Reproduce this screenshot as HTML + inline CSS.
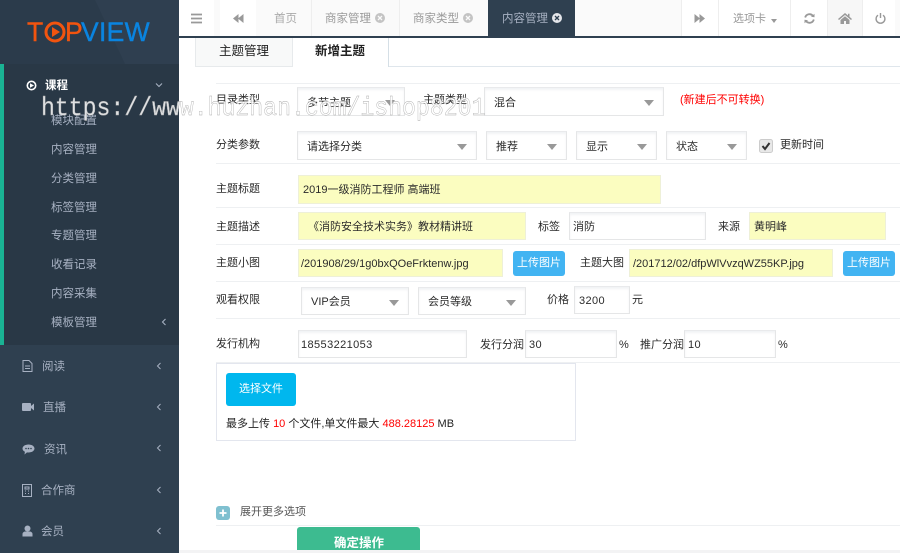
<!DOCTYPE html>
<html lang="zh"><head><meta charset="utf-8"><title>新增主题</title>
<style>
html,body{margin:0;padding:0;width:900px;height:553px;overflow:hidden;background:#fff}
body{position:relative;font:11px/16px "Liberation Sans","Noto Sans CJK SC",sans-serif;color:#2b2b2b}
div,span.a,svg.a{position:absolute}
.t{position:absolute;white-space:nowrap;height:16px;line-height:16px}
.n{color:#a7b1c2;font-size:11.5px;margin-top:1px}.m{color:#a7b1c2;font-size:11.5px;margin-top:1px}
.f{position:absolute;box-sizing:border-box;border:1px solid #e5e6e7;border-top-color:#e9eaec;box-shadow:inset 0 2px 2px #f2f3f5;background:#fff;padding-left:9px;line-height:29px;color:#2b2b2b;white-space:nowrap;overflow:hidden}
.y{background:#fbfdc0;border-color:#eef0d8;box-shadow:none;padding-left:4px}
.s{line-height:31px}
.s:after{content:"";position:absolute;right:9px;top:12px;border:5px solid transparent;border-top:6px solid #999;border-bottom:0}
.l{position:absolute;height:1px;left:216px;right:0;background:#eef0f2}
.b{position:absolute;background:#42b4f2;color:#fff;border-radius:3px;text-align:center;height:25px;line-height:25px;width:52px;top:251px}
.d{position:absolute;top:0;width:1px;height:36px;background:#eee}
.tb{font-size:11.5px}
.lg{position:absolute;white-space:nowrap;top:18px;height:28px;line-height:28px;font-size:26.5px;-webkit-text-stroke:.4px currentColor}
</style></head><body>
<!-- sidebar -->
<div style="left:0;top:0;width:179px;height:553px;background:#2f4050"></div>
<svg class="a" style="left:0;top:0" width="179" height="64"><rect width="179" height="64" fill="#2b3b4b"/><polygon points="95,0 179,0 179,64 125,64" fill="#2f3f50"/></svg>
<div style="left:0;top:64px;width:179px;height:281px;background:#293846"></div>
<div style="left:0;top:64px;width:4px;height:281px;background:#1ab394"></div>
<!-- logo -->
<span class="lg" style="left:27px;color:#f2540f">T</span>
<svg class="a" style="left:43px;top:20px" width="24" height="24"><circle cx="12" cy="12" r="9" fill="none" stroke="#f2540f" stroke-width="3"/><polygon points="9,7 17,12 9,17" fill="#f2540f"/></svg>
<span class="lg" style="left:65px;color:#f2540f">P</span>
<span class="lg" style="left:81px;letter-spacing:.3px;color:#0a84e0">VIEW</span>
<!-- course -->
<svg class="a" style="left:26px;top:80px" width="11" height="11"><circle cx="5.5" cy="5.5" r="4.2" fill="none" stroke="#fff" stroke-width="1.6"/><polygon points="4,3.2 8,5.5 4,7.8" fill="#fff"/></svg>
<span class="t" style="left:45px;top:78px;color:#fff;font-weight:bold;font-size:11.5px">课程</span>
<svg class="a" style="left:155px;top:82px" width="8" height="6"><path d="M1 1.5l3 3 3-3" fill="none" stroke="#a7b1c2" stroke-width="1.1"/></svg>
<span class="t m" style="left:51px;top:112px">模块配置</span>
<span class="t m" style="left:51px;top:141px">内容管理</span>
<span class="t m" style="left:51px;top:170px">分类管理</span>
<span class="t m" style="left:51px;top:199px">标签管理</span>
<span class="t m" style="left:51px;top:227px">专题管理</span>
<span class="t m" style="left:51px;top:256px">收看记录</span>
<span class="t m" style="left:51px;top:285px">内容采集</span>
<span class="t m" style="left:51px;top:314px">模板管理</span>
<svg class="a" style="left:161px;top:318px" width="6" height="8"><path d="M4.5 1l-3 3 3 3" fill="none" stroke="#a7b1c2" stroke-width="1.1"/></svg>
<!-- nav -->
<svg class="a" style="left:22px;top:360px" width="11" height="12"><path d="M1 .5h6l3 3v8H1zM3 6h5M3 8.500h5" fill="none" stroke="#a7b1c2"/></svg>
<span class="t n" style="left:42px;top:358px">阅读</span>
<svg class="a" style="left:22px;top:402px" width="13" height="10"><rect y="1" width="9" height="8" rx="1" fill="#a7b1c2"/><polygon points="9,4 12,1.500 12,8.500 9,6" fill="#a7b1c2"/></svg>
<span class="t n" style="left:43px;top:399px">直播</span>
<svg class="a" style="left:22px;top:444px" width="13" height="11"><path d="M6.500 0.500c3.300 0 6 1.800 6 4s-2.700 4-6 4c-.6 0-1 0-1.500-.1L2.500 10.500l.4-2.800C1.400 7 .5 5.800.5 4.500c0-2.200 2.700-4 6-4z" fill="#a7b1c2"/><circle cx="4" cy="4.500" r=".8" fill="#2f4050"/><circle cx="6.500" cy="4.500" r=".8" fill="#2f4050"/><circle cx="9" cy="4.500" r=".8" fill="#2f4050"/></svg>
<span class="t n" style="left:44px;top:441px">资讯</span>
<svg class="a" style="left:22px;top:484px" width="11" height="13"><rect x=".5" y=".5" width="9" height="12" fill="none" stroke="#a7b1c2"/><path d="M3 3h4v2H3zM3 7h1M6 7h1M3 9.500h1M6 9.500h1" fill="none" stroke="#a7b1c2"/></svg>
<span class="t n" style="left:41px;top:482px">合作商</span>
<svg class="a" style="left:22px;top:525px" width="11" height="12"><circle cx="5.500" cy="3.500" r="3" fill="#a7b1c2"/><path d="M.5 11.500V9c0-1.500 1.500-2.500 3-2.500h4c1.500 0 3 1 3 2.500v2.500z" fill="#a7b1c2"/></svg>
<span class="t n" style="left:41px;top:523px">会员</span>
<svg class="a" style="left:156px;top:362px" width="6" height="8"><path d="M4.500 1l-3 3 3 3" fill="none" stroke="#a7b1c2"/></svg>
<svg class="a" style="left:156px;top:403px" width="6" height="8"><path d="M4.500 1l-3 3 3 3" fill="none" stroke="#a7b1c2"/></svg>
<svg class="a" style="left:156px;top:444px" width="6" height="8"><path d="M4.500 1l-3 3 3 3" fill="none" stroke="#a7b1c2"/></svg>
<svg class="a" style="left:156px;top:486px" width="6" height="8"><path d="M4.500 1l-3 3 3 3" fill="none" stroke="#a7b1c2"/></svg>
<svg class="a" style="left:156px;top:527px" width="6" height="8"><path d="M4.500 1l-3 3 3 3" fill="none" stroke="#a7b1c2"/></svg>
<!-- top bar -->
<div style="left:179px;top:0;width:721px;height:36px;background:#fafafa"></div>
<div style="left:179px;top:0;width:35px;height:36px;background:#fff"></div>
<div style="left:220px;top:0;width:36px;height:36px;background:#fff"></div>
<div style="left:179px;top:36px;width:721px;height:2px;background:#2f4050"></div>
<svg class="a" style="left:191px;top:13px" width="12" height="11"><path d="M0 1.500h11M0 5.500h11M0 9.500h11" stroke="#999" stroke-width="1.800"/></svg>
<svg class="a" style="left:233px;top:13px" width="11" height="11"><polygon points="5.500,1 0,5.500 5.500,10" fill="#999"/><polygon points="10.500,1 5,5.500 10.500,10" fill="#999"/></svg>
<span class="t tb" style="left:274px;top:11px;color:#aaa">首页</span>
<div class="d" style="left:311px"></div>
<span class="t tb" style="left:325px;top:11px;color:#999">商家管理</span>
<svg class="a" style="left:375px;top:13px" width="10" height="10"><circle cx="5" cy="5" r="5" fill="#c4c4c4"/><path d="M3 3l4 4M7 3l-4 4" stroke="#fafafa" stroke-width="1.300"/></svg>
<div class="d" style="left:399px"></div>
<span class="t tb" style="left:413px;top:11px;color:#999">商家类型</span>
<svg class="a" style="left:463px;top:13px" width="10" height="10"><circle cx="5" cy="5" r="5" fill="#c4c4c4"/><path d="M3 3l4 4M7 3l-4 4" stroke="#fafafa" stroke-width="1.300"/></svg>
<div style="left:488px;top:0;width:87px;height:36px;background:#2f4050"></div>
<span class="t tb" style="left:502px;top:11px;color:#a7b1c2">内容管理</span>
<svg class="a" style="left:552px;top:13px" width="10" height="10"><circle cx="5" cy="5" r="5" fill="#e4e6ea"/><path d="M3 3l4 4M7 3l-4 4" stroke="#2f4050" stroke-width="1.300"/></svg>
<div style="left:681px;top:0;width:214px;height:36px;background:#fff"></div>
<div style="left:827px;top:0;width:35px;height:36px;background:#f7f7f7"></div>
<div class="d" style="left:681px"></div><div class="d" style="left:718px"></div><div class="d" style="left:790px"></div><div class="d" style="left:827px"></div><div class="d" style="left:862px"></div>
<svg class="a" style="left:694px;top:13px" width="11" height="11"><polygon points="0.500,1 6,5.500 0.500,10" fill="#999"/><polygon points="5.500,1 11,5.500 5.500,10" fill="#999"/></svg>
<span class="t" style="left:733px;top:11px;color:#999">选项卡</span>
<div style="left:771px;top:19px;border:3.500px solid transparent;border-top:4px solid #999;border-bottom:0"></div>
<svg class="a" style="left:804px;top:13px" width="11" height="11"><path d="M1.200 4.500A4.400 4.400 0 0 1 9 3M9.800 6.500A4.400 4.400 0 0 1 2 8" fill="none" stroke="#999" stroke-width="1.800"/><polygon points="7,3.800 10.500,4.200 10.500,.8" fill="#999"/><polygon points="4,7.200 .5,6.800 .5,10.200" fill="#999"/></svg>
<svg class="a" style="left:838px;top:13px" width="14" height="11"><path d="M7 0L0 6l1 1 6-5 6 5 1-1-2.500-2.200V.8H10v1.700z" fill="#999"/><path d="M2.500 7L7 3.200 11.500 7v4H8V8H6v3H2.500z" fill="#999"/></svg>
<svg class="a" style="left:875px;top:13px" width="11" height="11"><path d="M3 2.200a4.400 4.400 0 1 0 5 0" fill="none" stroke="#999" stroke-width="1.400"/><path d="M5.500 0v5" stroke="#999" stroke-width="1.400"/></svg>
<!-- subtabs -->
<div style="left:388px;top:66px;width:512px;height:1px;background:#dfe6ec"></div>
<div style="box-sizing:border-box;left:195px;top:38px;width:98px;height:29px;background:#f8f9f9;border:1px solid #e7eaec;border-top:0"></div>
<div style="left:388px;top:38px;width:1px;height:29px;background:#d5dfe6"></div>
<span class="t" style="left:219px;top:43px;font-size:12.5px;color:#222">主题管理</span>
<span class="t" style="left:315px;top:43px;font-size:12.5px;font-weight:bold;color:#222">新增主题</span>
<!-- lines -->
<div class="l" style="top:83px"></div><div class="l" style="top:163px"></div><div class="l" style="top:207px"></div><div class="l" style="top:244px"></div><div class="l" style="top:281px"></div><div class="l" style="top:318px"></div><div class="l" style="top:362px"></div><div class="l" style="top:525px"></div>
<!-- row 1 -->
<span class="t" style="left:216px;top:92px">目录类型</span>
<div class="f s" style="left:297px;top:87px;width:108px;height:29px">多节主题</div>
<span class="t" style="left:423px;top:92px">主题类型</span>
<div class="f s" style="left:484px;top:87px;width:180px;height:29px">混合</div>
<span class="t" style="left:680px;top:92px;color:#f00">(新建后不可转换)</span>
<!-- row 2 -->
<span class="t" style="left:216px;top:137px">分类参数</span>
<div class="f s" style="left:297px;top:131px;width:180px;height:29px">请选择分类</div>
<div class="f s" style="left:486px;top:131px;width:81px;height:29px">推荐</div>
<div class="f s" style="left:576px;top:131px;width:81px;height:29px">显示</div>
<div class="f s" style="left:666px;top:131px;width:81px;height:29px">状态</div>
<svg class="a" style="left:759px;top:139px" width="14" height="14"><rect x=".5" y=".5" width="13" height="13" rx="2" fill="#e8e8e8" stroke="#ccc"/><path d="M3.500 7l2.500 3 4.500-6" fill="none" stroke="#333" stroke-width="2"/></svg>
<span class="t" style="left:780px;top:137px">更新时间</span>
<!-- title -->
<span class="t" style="left:216px;top:181px">主题标题</span>
<div class="f y" style="left:298px;top:175px;width:363px;height:29px">2019一级消防工程师 高端班</div>
<span class="t" style="left:216px;top:219px">主题描述</span>
<div class="f y" style="left:298px;top:212px;width:228px;height:28px;padding-left:9px">《消防安全技术实务》教材精讲班</div>
<span class="t" style="left:538px;top:219px">标签</span>
<div class="f" style="left:569px;top:212px;width:137px;height:28px;padding-left:3px">消防</div>
<span class="t" style="left:718px;top:219px">来源</span>
<div class="f y" style="left:749px;top:212px;width:137px;height:28px">黄明峰</div>
<!-- images -->
<span class="t" style="left:216px;top:255px">主题小图</span>
<div class="f y" style="left:298px;top:249px;width:205px;height:28px;padding-left:2px">/201908/29/1g0bxQOeFrktenw.jpg</div>
<div class="b" style="left:513px">上传图片</div>
<span class="t" style="left:580px;top:255px">主题大图</span>
<div class="f y" style="left:629px;top:249px;width:204px;height:28px;padding-left:3px">/201712/02/dfpWlVvzqWZ55KP.jpg</div>
<div class="b" style="left:843px">上传图片</div>
<!-- perms -->
<span class="t" style="left:216px;top:292px">观看权限</span>
<div class="f s" style="left:301px;top:287px;width:108px;height:28px;line-height:29px">VIP会员</div>
<div class="f s" style="left:418px;top:287px;width:108px;height:28px;line-height:29px">会员等级</div>
<span class="t" style="left:547px;top:292px">价格</span>
<div class="f" style="left:574px;top:286px;width:56px;height:28px;padding-left:4px;letter-spacing:.4px">3200</div>
<span class="t" style="left:632px;top:292px">元</span>
<!-- org -->
<span class="t" style="left:216px;top:336px">发行机构</span>
<div class="f" style="left:298px;top:330px;width:169px;height:28px;padding-left:2px;letter-spacing:.4px">18553221053</div>
<span class="t" style="left:480px;top:337px">发行分润</span>
<div class="f" style="left:525px;top:330px;width:92px;height:28px;padding-left:3px;letter-spacing:.4px">30</div>
<span class="t" style="left:619px;top:337px">%</span>
<span class="t" style="left:640px;top:337px">推广分润</span>
<div class="f" style="left:684px;top:330px;width:92px;height:28px;padding-left:3px;letter-spacing:.4px">10</div>
<span class="t" style="left:778px;top:337px">%</span>
<!-- upload -->
<div style="box-sizing:border-box;left:216px;top:363px;width:360px;height:78px;border:1px solid #e3e6ee"></div>
<div style="left:226px;top:373px;width:70px;height:33px;background:#00b7ee;border-radius:3px;color:#fff;text-align:center;line-height:33px">选择文件</div>
<span class="t" style="left:226px;top:416px;color:#222">最多上传 <span style="color:#f00">10</span> 个文件,单文件最大 <span style="color:#f00">488.28125</span> MB</span>
<!-- more -->
<div style="left:216px;top:506px;width:14px;height:14px;background:#7fc0d0;border-radius:3px"></div>
<svg class="a" style="left:219px;top:509px" width="8" height="8"><path d="M4 .5v7M.5 4h7" stroke="#fff" stroke-width="1.800"/></svg>
<span class="t" style="left:240px;top:504px;font-size:11px;color:#555">展开更多选项</span>
<div style="left:297px;top:527px;width:123px;height:23px;background:#3dbb90;border-radius:3px 3px 0 0"></div>
<span class="t" style="left:334px;top:535px;font-size:12.5px;font-weight:bold;color:#fff">确定操作</span>
<div style="left:179px;top:550px;width:721px;height:3px;background:#f3f3f4"></div>
<!-- watermark -->
<span class="t" style="left:41px;top:93px;height:30px;line-height:30px;font-family:'Liberation Mono',monospace;font-size:26px;transform:scaleX(.89);transform-origin:0 0;color:rgba(255,255,255,.85);-webkit-text-stroke:.4px #aaa">https://www.huzhan.com/ishop8201</span>
</body></html>
